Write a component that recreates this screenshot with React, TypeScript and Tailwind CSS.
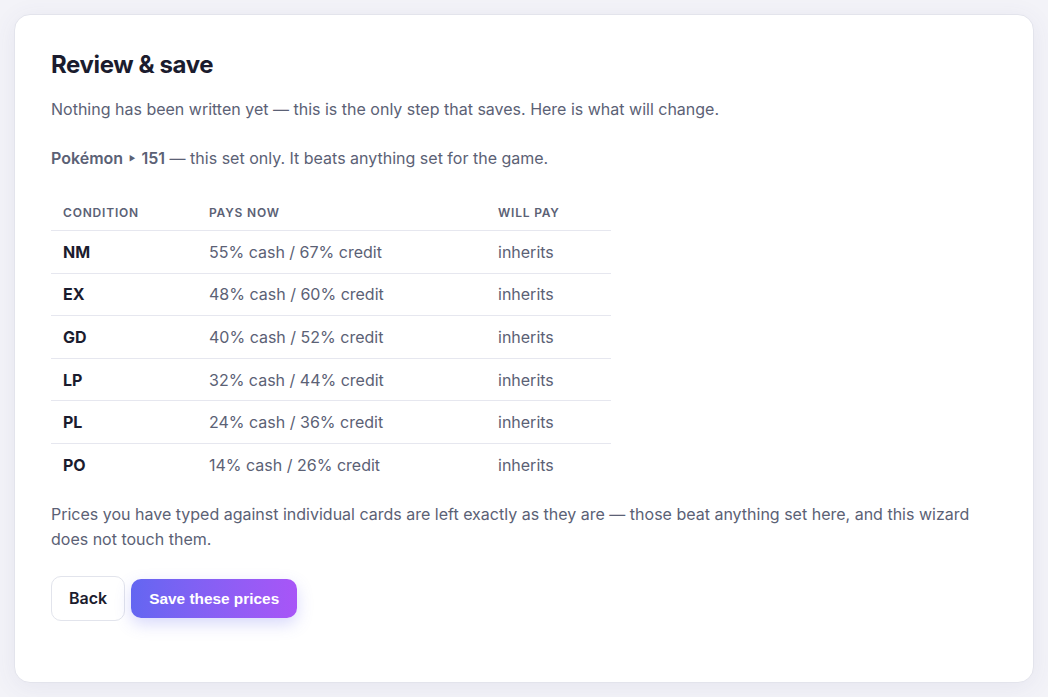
const rows = [
  { cond: 'NM', now: '55% cash / 67% credit' },
  { cond: 'EX', now: '48% cash / 60% credit' },
  { cond: 'GD', now: '40% cash / 52% credit' },
  { cond: 'LP', now: '32% cash / 44% credit' },
  { cond: 'PL', now: '24% cash / 36% credit' },
  { cond: 'PO', now: '14% cash / 26% credit' },
]

export default function App() {
  return (
    <div className="min-h-screen bg-[#f3f3f8] p-[14px] font-['Inter',sans-serif]">
      <div className="rounded-[16px] border border-[#e3e4ec] bg-white px-[36px] pt-[34px] pb-[61px] shadow-[0_4px_24px_rgba(80,80,140,0.08)]">
        <h1 className="text-[24px] leading-8 font-bold tracking-[-0.4px] text-[#1b1c2e]">Review &amp; save</h1>
        <p className="mt-[16px] text-[16px] leading-[25px] text-[#5b6175]">
          Nothing has been written yet — this is the only step that saves. Here is what will change.
        </p>
        <p className="mt-[24px] text-[16px] leading-[25px] text-[#5b6175]">
          <span className="font-semibold">Pokémon</span>
          <span className="mx-[6px] text-[7px] align-[3px]">▶</span>
          <span className="font-semibold">151</span> — this set only. It beats anything set for the game.
        </p>

        <div className="mt-[24px] w-[560px]">
          <div className="grid grid-cols-[146px_289px_125px] text-[12px] leading-[18px] font-semibold tracking-[0.8px] text-[#5b6175] uppercase">
            <div className="px-3 pt-[9px] pb-[8px]">Condition</div>
            <div className="px-3 pt-[9px] pb-[8px]">Pays now</div>
            <div className="px-3 pt-[9px] pb-[8px]">Will pay</div>
          </div>
          {rows.map((r) => (
            <div
              key={r.cond}
              className="grid grid-cols-[146px_289px_125px] border-t border-[#e6e7ef] text-[16px] leading-6"
            >
              <div className="px-3 py-[8.8px] font-bold text-[#1b1c2e]">{r.cond}</div>
              <div className="px-3 py-[8.8px] text-[#5b6175]">{r.now}</div>
              <div className="px-3 py-[8.8px] text-[#5b6175]">inherits</div>
            </div>
          ))}
        </div>

        <p className="mt-[16px] text-[16px] leading-[25px] text-[#5b6175]">
          Prices you have typed against individual cards are left exactly as they are — those beat anything set here,
          and this wizard does not touch them.
        </p>

        <div className="mt-[24px] flex items-center gap-[6px]">
          <button className="h-[45px] rounded-[10px] border border-[#e2e4ec] bg-white px-[17px] text-[16px] font-semibold text-[#1b1c2e]">
            Back
          </button>
          <button className="h-[39px] rounded-[10px] bg-gradient-to-r from-[#6366f1] to-[#a855f7] px-[18px] font-['Liberation_Sans',Arial,sans-serif] text-[15.4px] font-bold text-white shadow-[0_6px_16px_rgba(99,102,241,0.25)]">
            Save these prices
          </button>
        </div>
      </div>
    </div>
  )
}
